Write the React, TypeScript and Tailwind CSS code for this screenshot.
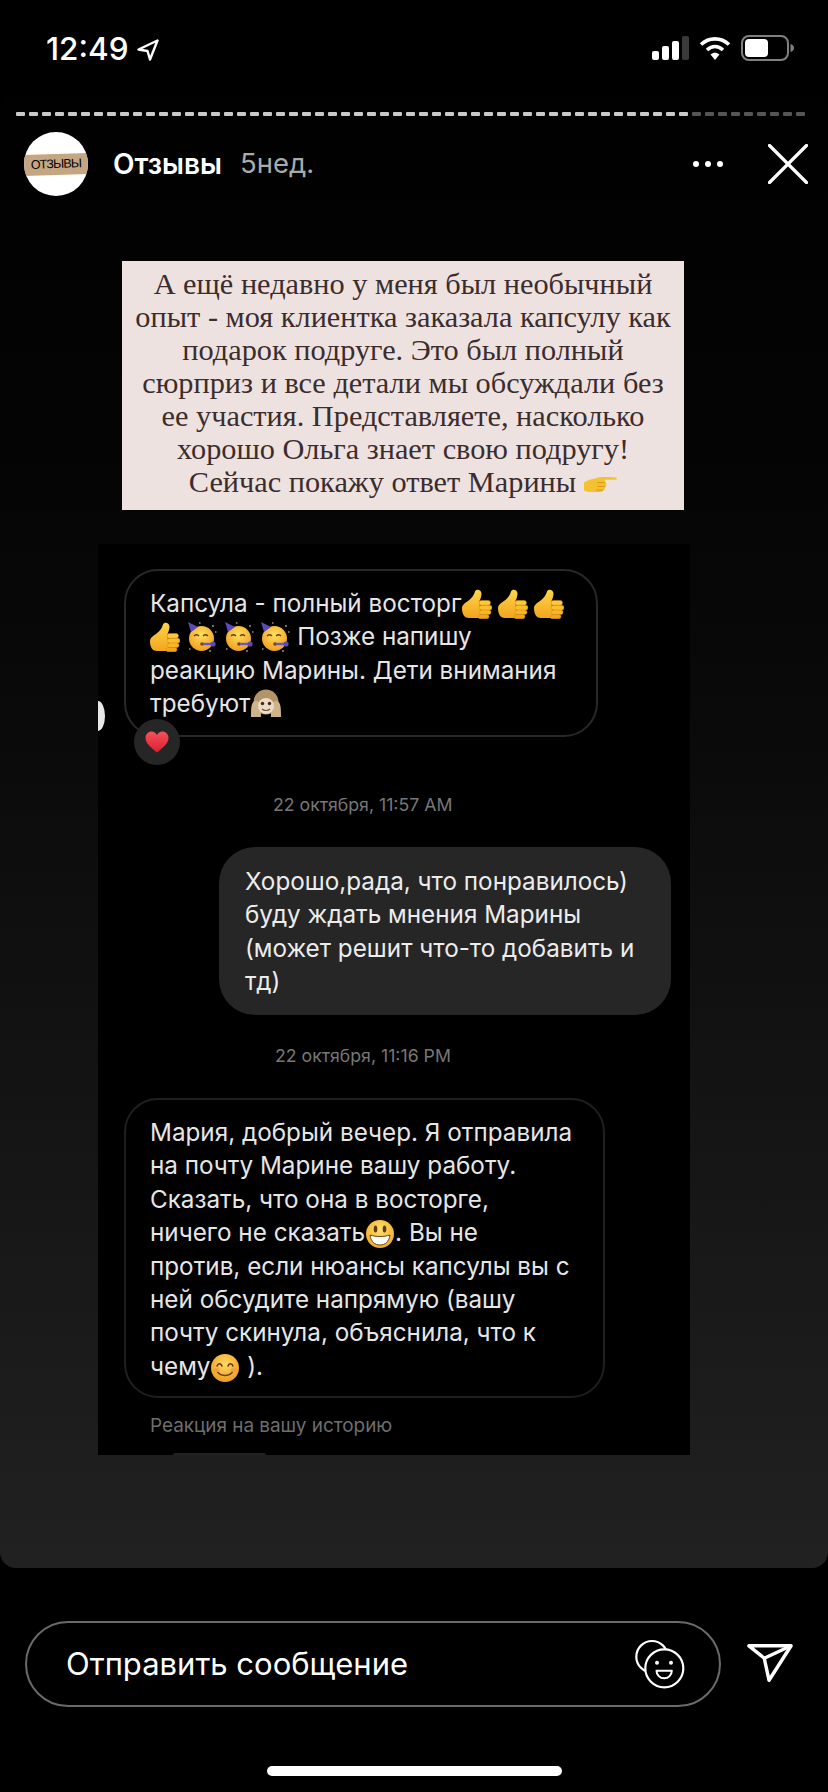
import React from "react";

const Thumb = ({ className = "" }: { className?: string }) => (
  <svg viewBox="0 0 30 30" className={`inline-block w-[30px] h-[30px] align-[-7px] ${className}`}>
    <defs>
      <linearGradient id="th" x1="0" y1="0" x2="0" y2="1">
        <stop offset="0" stopColor="#ffd54a" />
        <stop offset="1" stopColor="#f2a51e" />
      </linearGradient>
    </defs>
    <path d="M0 19c0-3 3-5 6-7 4-3 6-6 7-9.500C14 -.5 19.500 .5 19.500 4.500c0 3-1 5-2 7.500l1 17H7c-4 0-7-3-7-10z" fill="url(#th)" />
    <rect x="17" y="11.500" width="11.500" height="4.800" rx="2.400" fill="#fdc93a" stroke="#d9921a" strokeWidth=".5" />
    <rect x="17" y="16.300" width="13" height="4.800" rx="2.400" fill="#fbbf2e" stroke="#d9921a" strokeWidth=".5" />
    <rect x="17" y="21.100" width="12" height="4.400" rx="2.200" fill="#f8b526" stroke="#d9921a" strokeWidth=".5" />
    <rect x="16" y="25.500" width="11" height="4.200" rx="2.100" fill="#f2a51e" stroke="#d9921a" strokeWidth=".5" />
  </svg>
);

const Party = () => (
  <svg viewBox="0 0 30 30" className="inline-block w-[30px] h-[30px] align-[-7px]">
    <defs>
      <radialGradient id="pa" cx="0.5" cy="0.35" r="0.7">
        <stop offset="0" stopColor="#ffdf5e" />
        <stop offset="1" stopColor="#f09a1c" />
      </radialGradient>
    </defs>
    <circle cx="14.500" cy="16.500" r="12.500" fill="url(#pa)" />
    <path d="M1 0l10 5-7 5z" fill="#5b4bb8" />
    <path d="M7 14c1.500-1.500 3.500-1.500 5 0M16 14c1.500-1.500 3.500-1.500 5 0" stroke="#6b3d12" strokeWidth="1.300" fill="none" />
    <circle cx="15" cy="22" r="1.800" fill="#7a4310" />
    <path d="M16 22l8 0" stroke="#6a55c9" strokeWidth="2.400" />
    <circle cx="26" cy="22" r="2.600" fill="#5b4bb8" />
    <path d="M25 4h2M28 10h1.500M2 27h1.500M22 29h2M12 1h1.500" stroke="#e6d9b0" strokeWidth="1.200" />
  </svg>
);

const Monkey = () => (
  <svg viewBox="0 0 32 30" className="inline-block w-[32px] h-[30px] align-[-6px]">
    <circle cx="16" cy="14" r="12.500" fill="#b2946a" />
    <path d="M1 29c0-9 0-16 5-16s5 8 5 16zM31 29c0-9 0-16-5-16s-5 8-5 16z" fill="#cfb389" />
    <ellipse cx="16" cy="18" rx="8" ry="8" fill="#ecdcc6" />
    <circle cx="12.500" cy="15.500" r="1.700" fill="#3b2a1c" />
    <circle cx="19.500" cy="15.500" r="1.700" fill="#3b2a1c" />
    <path d="M12 21c2 2 6 2 8 0" stroke="#6e4e30" strokeWidth="1.200" fill="none" />
  </svg>
);

const Grin = () => (
  <svg viewBox="0 0 30 30" className="inline-block w-[30px] h-[30px] align-[-8px]">
    <defs>
      <radialGradient id="gr" cx="0.5" cy="0.35" r="0.7">
        <stop offset="0" stopColor="#ffe070" />
        <stop offset="1" stopColor="#eea51f" />
      </radialGradient>
    </defs>
    <circle cx="15" cy="15" r="14" fill="url(#gr)" />
    <ellipse cx="10.500" cy="10" rx="1.800" ry="3.500" fill="#5c3a12" />
    <ellipse cx="19.500" cy="10" rx="1.800" ry="3.500" fill="#5c3a12" />
    <path d="M5 16c6 2 14 2 20 0-1 7-5 10-10 10S6 23 5 16z" fill="#fff" stroke="#6b4414" strokeWidth="1" />
  </svg>
);

const Smile = () => (
  <svg viewBox="0 0 30 30" className="inline-block w-[30px] h-[30px] align-[-8px]">
    <defs>
      <radialGradient id="sm" cx="0.5" cy="0.35" r="0.7">
        <stop offset="0" stopColor="#ffd964" />
        <stop offset="1" stopColor="#ee961c" />
      </radialGradient>
    </defs>
    <circle cx="15" cy="15" r="14" fill="url(#sm)" />
    <path d="M7 13c1-3 4-3 5 0M18 13c1-3 4-3 5 0" stroke="#5c3a12" strokeWidth="1.500" fill="none" strokeLinecap="round" />
    <path d="M7 18c3 6 13 6 16 0" stroke="#5c3a12" strokeWidth="1.500" fill="none" strokeLinecap="round" />
    <ellipse cx="6" cy="17" rx="3" ry="2" fill="#f5a03c" />
    <ellipse cx="24" cy="17" rx="3" ry="2" fill="#f5a03c" />
  </svg>
);

const PointRight = () => (
  <svg viewBox="0 0 35 20" className="inline-block w-[33px] h-[19px] align-[-2px] ml-[8px]">
    <path d="M0 8c3-2 6-3 10-4 4-1 6-2 9-2 5 0 10 0 15 .5 1.500 1 .5 2.500-1 2.500H22l1 3c1 1 1 3 0 4l-1 3c-1 2-3 3-6 3H8c-4 0-7-1-8-2z" fill="#f5c22f" />
    <path d="M14 8h8M14 12h8M13 16h7" stroke="#d4961a" strokeWidth="1" />
  </svg>
);

const Message = ({ lines, className }: { lines: React.ReactNode[]; className: string }) => (
  <div className={`text-[24.25px] leading-[33.400px] whitespace-nowrap ${className}`}>
    {lines.map((line, index) => (
      <div key={index}>{line}</div>
    ))}
  </div>
);

const storyLines = [
  "А ещё недавно у меня был необычный",
  "опыт - моя клиентка заказала капсулу как",
  "подарок подруге. Это был полный",
  "сюрприз и все детали мы обсуждали без",
  "ее участия. Представляете, насколько",
  "хорошо Ольга знает свою подругу!",
];

export default function App() {
  const dashes = Array.from({ length: 61 }, (_, index) => index);
  return (
    <div className="w-[828px] h-[1792px] bg-black flex flex-col overflow-hidden font-['Inter',sans-serif] text-white">
      {/* status bar */}
      <div className="h-[95px] shrink-0 flex items-start pt-[29px] pl-[46px]">
        <span className="text-[31.500px] leading-[40px] font-medium">12:49</span>
        <svg viewBox="0 0 22 22" className="w-[22px] h-[22px] ml-[8px] mt-[10px]">
          <path d="M20.500 1.500L1.500 10.500l9 1.500 2.500 8.500z" fill="none" stroke="#fff" strokeWidth="2.400" strokeLinejoin="round" />
        </svg>
        <div className="ml-auto flex items-center gap-[10px] pr-[34px] mt-[6px]">
          <svg viewBox="0 0 37 24" className="w-[37px] h-[24px]">
            <rect x="0" y="15" width="7" height="9" rx="2" fill="#fff" />
            <rect x="10" y="10" width="7" height="14" rx="2" fill="#fff" />
            <rect x="20" y="5" width="7" height="19" rx="2" fill="#fff" />
            <rect x="30" y="0" width="7" height="24" rx="2" fill="#3a3a3a" />
          </svg>
          <svg viewBox="0 0 32 25" className="w-[32px] h-[25px]">
            <path d="M2 8.500C10 1 22 1 30 8.500" fill="none" stroke="#fff" strokeWidth="3.600" />
            <path d="M8 14c5-4.500 11-4.500 16 0" fill="none" stroke="#fff" strokeWidth="3.600" />
            <path d="M11.500 18.500c3-2.500 6-2.500 9 0L16 24z" fill="#fff" />
          </svg>
          <svg viewBox="0 0 53 26" className="w-[53px] h-[26px]">
            <rect x="1" y="1" width="46" height="24" rx="7" fill="none" stroke="#808080" strokeWidth="2" />
            <rect x="4" y="4" width="23" height="18" rx="4" fill="#fff" />
            <path d="M49.500 9c2 .5 3.500 2 3.500 4s-1.500 3.500-3.500 4z" fill="#808080" />
          </svg>
        </div>
      </div>

      {/* story */}
      <div className="h-[1473px] shrink-0 rounded-[16px] bg-linear-to-b from-[#010101] to-[#212121] flex flex-col">
        <div className="flex gap-[4px] pl-[16px] pt-[17px]">
          {dashes.map((index) => (
            <div
              key={index}
              className={index < 52 ? "w-[9px] h-[4px] rounded-[1px] bg-[#c9c9c9]" : "w-[9px] h-[4px] rounded-[1px] bg-[#555555]"}
            />
          ))}
        </div>

        <div className="flex items-center h-[64px] mt-[16px] pl-[24px] pr-[20px]">
          <div className="w-[64px] h-[64px] rounded-full bg-white overflow-hidden flex items-center shrink-0">
            <div className="w-full h-[21px] bg-[#c5a683] -rotate-2 flex items-center justify-center text-[12.500px] text-black font-medium tracking-[-0.8px] font-['Liberation_Sans',sans-serif]">
              ОТЗЫВЫ
            </div>
          </div>
          <span className="ml-[25px] text-[28px] font-semibold">Отзывы</span>
          <span className="ml-[18px] text-[27.500px] text-[#aaaaaa]">5нед.</span>
          <div className="ml-auto flex gap-[6px]">
            <div className="w-[6px] h-[6px] rounded-full bg-white" />
            <div className="w-[6px] h-[6px] rounded-full bg-white" />
            <div className="w-[6px] h-[6px] rounded-full bg-white" />
          </div>
          <svg viewBox="0 0 40 40" className="w-[40px] h-[40px] ml-[45px]">
            <path d="M1.500 1.500l37 37M38.500 1.500l-37 37" stroke="#fff" strokeWidth="3.200" strokeLinecap="round" />
          </svg>
        </div>

        {/* text card */}
        <div className="w-[562px] h-[249px] ml-[122px] mt-[65px] bg-[#eee2e0] text-[#3b2d2d] text-center pt-[7px] font-['Liberation_Serif',serif] text-[30.300px] leading-[33px] whitespace-nowrap">
          {storyLines.map((line) => (
            <div key={line}>{line}</div>
          ))}
          <div>
            Сейчас покажу ответ Марины
            <PointRight />
          </div>
        </div>

        {/* screenshot of the chat */}
        <div className="relative w-[592px] h-[911px] ml-[98px] mt-[34px] bg-black pt-[25px] overflow-hidden">
          <div className="absolute left-0 top-[157px] w-[7px] h-[30px] rounded-r-[7px_15px] bg-[#e8e8e8]" />
          <Message
            className="w-[474px] h-[168px] ml-[26px] px-[24px] pt-[16px] rounded-[34px] border-2 border-[#282828] text-[#e6e6e6]"
            lines={[
              <>
                Капсула - полный восторг<Thumb /><Thumb className="ml-[6px]" /><Thumb className="ml-[6px]" />
              </>,
              <>
                <Thumb /> <Party /> <Party /> <Party />  Позже напишу
              </>,
              "реакцию Марины. Дети внимания",
              <>
                требуют<Monkey />
              </>,
            ]}
          />
          <div className="absolute left-[36px] top-[175px] w-[46px] h-[46px] rounded-full bg-[#262626] flex items-center justify-center">
            <svg viewBox="0 0 24 22" className="w-[24px] h-[22px]">
              <defs>
                <linearGradient id="he" x1="0" y1="0" x2="0" y2="1">
                  <stop offset="0" stopColor="#f4515c" />
                  <stop offset="1" stopColor="#dc1f2e" />
                </linearGradient>
              </defs>
              <path d="M12 21.500C5 16 .5 12 .5 7 .5 3 3.500 .5 6.500 .5c2.500 0 4.500 1.500 5.500 3.500 1-2 3-3.500 5.500-3.500 3 0 6 2.500 6 6.500 0 5-4.500 9-11.500 14.500z" fill="url(#he)" />
            </svg>
          </div>
          <div className="ml-[175px] mt-[56px] text-[17.700px] leading-[24px] text-[#777777]">22 октября, 11:57 AM</div>
          <Message
            className="w-[452px] h-[168px] ml-[121px] mt-[30px] px-[26px] pt-[18px] rounded-[36px] bg-[#262626] text-[#ececec]"
            lines={[
              "Хорошо,рада, что понравилось)",
              "буду ждать мнения Марины",
              "(может решит что-то добавить и",
              "тд)",
            ]}
          />
          <div className="ml-[177px] mt-[29px] text-[17.700px] leading-[24px] text-[#777777]">22 октября, 11:16 PM</div>
          <Message
            className="w-[481px] h-[300px] ml-[26px] mt-[30px] px-[24px] pt-[16px] rounded-[34px] border-2 border-[#1f1f1f] text-[#e6e6e6]"
            lines={[
              "Мария, добрый вечер. Я отправила",
              "на почту Марине вашу работу.",
              "Сказать, что она в восторге,",
              <>
                ничего не сказать<Grin />. Вы не
              </>,
              "против, если нюансы капсулы вы с",
              "ней обсудите напрямую (вашу",
              "почту скинула, объяснила, что к",
              <>
                чему<Smile /> ).
              </>,
            ]}
          />
          <div className="ml-[52px] mt-[16px] text-[18.900px] leading-[24px] text-[#6e6e6e]">Реакция на вашу историю</div>
          <div className="absolute left-[75px] bottom-0 w-[93px] h-[2px] rounded-t-full bg-[#222222]" />
        </div>
      </div>

      {/* reply bar */}
      <div className="flex items-center mt-[53px] pl-[25px]">
        <div className="w-[696px] h-[86px] rounded-full border-2 border-[#6a6a6a] flex items-center pl-[39px] pr-[34px]">
          <span className="text-[31px] text-white">Отправить сообщение</span>
          <svg viewBox="0 0 50 50" className="w-[50px] h-[50px] ml-auto">
            <circle cx="17" cy="17.700" r="15.700" fill="none" stroke="#fff" strokeWidth="2.200" />
            <circle cx="29.300" cy="29.300" r="19" fill="#000" stroke="#fff" strokeWidth="2.200" />
            <circle cx="22" cy="23.700" r="2" fill="#fff" />
            <circle cx="36" cy="23.700" r="2" fill="#fff" />
            <path d="M21.500 31.700h15.300a7.650 7.650 0 0 1-15.300 0z" fill="none" stroke="#fff" strokeWidth="2" strokeLinejoin="round" />
          </svg>
        </div>
        <svg viewBox="0 0 48 42" className="w-[46px] h-[42px] ml-[26px]">
          <path d="M2 2h44L23 38 18 15z" fill="none" stroke="#fff" strokeWidth="3.600" strokeLinejoin="round" />
          <path d="M18 15L46 2" stroke="#fff" strokeWidth="3.600" />
        </svg>
      </div>

      {/* home indicator */}
      <div className="w-[295px] h-[10px] rounded-full bg-white ml-[267px] mt-[59px] shrink-0" />
    </div>
  );
}
